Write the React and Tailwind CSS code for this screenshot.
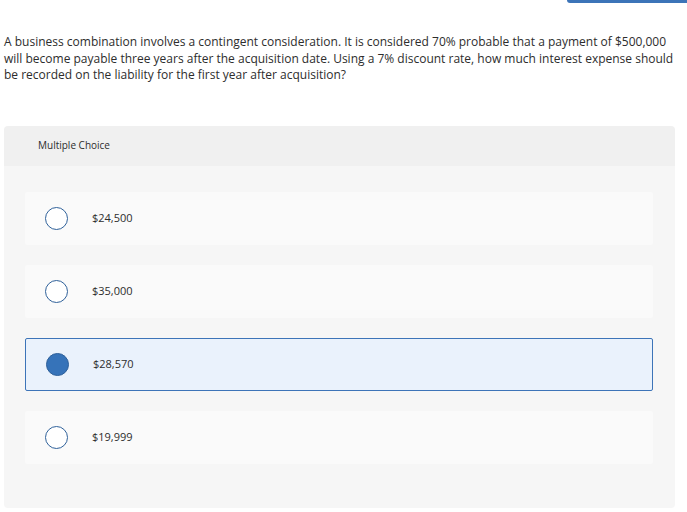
const choices = [
  { id: "a", label: "$24,500" },
  { id: "b", label: "$35,000" },
  { id: "c", label: "$28,570" },
  { id: "d", label: "$19,999" },
];

const Radio = ({ checked }) => (
  <span
    className={`block w-[23px] h-[23px] shrink-0 rounded-full border-[1.5px] border-[#2f619a] ${
      checked ? "bg-[#3673b9]" : "bg-white"
    }`}
  />
);

export default function App() {
  const selected = "c";

  return (
    <div className="w-full h-[512px] bg-white overflow-hidden font-['Open_Sans',sans-serif] text-[#2d2d2d]">
      {/* cut-off button at the top right */}
      <div className="flex justify-end">
        <div className="w-[120px] h-[3px] bg-[#3c74b8] rounded-bl-sm" />
      </div>

      <p className="mt-[31px] px-[4px] w-[684px] text-[12px] leading-[16.5px]">
        A business combination involves a contingent consideration. It is considered 70% probable
        that a payment of $500,000 will become payable three years after the acquisition date.
        Using a 7% discount rate, how much interest expense should be recorded on the liability for
        the first year after acquisition?
      </p>

      <div className="mt-[42px] ml-[4px] w-[671px] rounded-sm overflow-hidden">
        <div className="h-[40px] bg-[#f0f0f0] flex items-center pl-[34px] text-[10px]">
          Multiple Choice
        </div>

        <div className="bg-[#f6f6f6] pt-[26px] pb-[44px] pl-[21px] pr-[22px] flex flex-col gap-[20px]">
          {choices.map((choice) => {
            const isSelected = choice.id === selected;
            return (
              <div
                key={choice.id}
                className={`h-[53px] flex items-center pl-[20px] gap-[24px] rounded-[2px] ${
                  isSelected
                    ? "bg-[#eaf2fc] border border-[#3d74b8] pl-[19px]"
                    : "bg-[#fafafa]"
                }`}
              >
                <Radio checked={isSelected} />
                <span className="text-[11px]">{choice.label}</span>
              </div>
            );
          })}
        </div>
      </div>
    </div>
  );
}
